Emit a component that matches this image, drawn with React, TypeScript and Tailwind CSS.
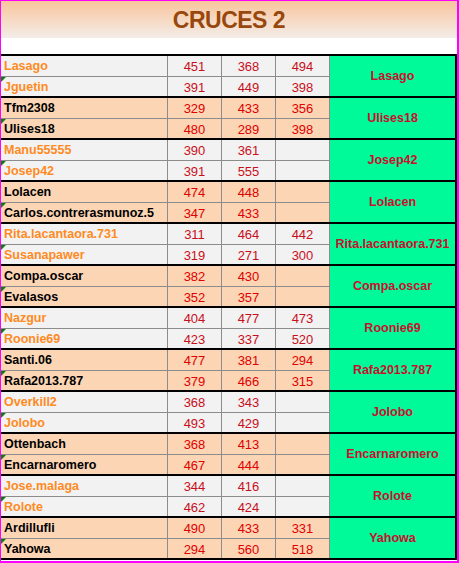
import React from "react";

type Player = { name: string; scores: string[] };
type Cross = { a: Player; b: Player; winner: string };

const crosses: Cross[] = [
  { a: { name: "Lasago", scores: ["451", "368", "494"] }, b: { name: "Jguetin", scores: ["391", "449", "398"] }, winner: "Lasago" },
  { a: { name: "Tfm2308", scores: ["329", "433", "356"] }, b: { name: "Ulises18", scores: ["480", "289", "398"] }, winner: "Ulises18" },
  { a: { name: "Manu55555", scores: ["390", "361", ""] }, b: { name: "Josep42", scores: ["391", "555", ""] }, winner: "Josep42" },
  { a: { name: "Lolacen", scores: ["474", "448", ""] }, b: { name: "Carlos.contrerasmunoz.5", scores: ["347", "433", ""] }, winner: "Lolacen" },
  { a: { name: "Rita.lacantaora.731", scores: ["311", "464", "442"] }, b: { name: "Susanapawer", scores: ["319", "271", "300"] }, winner: "Rita.lacantaora.731" },
  { a: { name: "Compa.oscar", scores: ["382", "430", ""] }, b: { name: "Evalasos", scores: ["352", "357", ""] }, winner: "Compa.oscar" },
  { a: { name: "Nazgur", scores: ["404", "477", "473"] }, b: { name: "Roonie69", scores: ["423", "337", "520"] }, winner: "Roonie69" },
  { a: { name: "Santi.06", scores: ["477", "381", "294"] }, b: { name: "Rafa2013.787", scores: ["379", "466", "315"] }, winner: "Rafa2013.787" },
  { a: { name: "Overkill2", scores: ["368", "343", ""] }, b: { name: "Jolobo", scores: ["493", "429", ""] }, winner: "Jolobo" },
  { a: { name: "Ottenbach", scores: ["368", "413", ""] }, b: { name: "Encarnaromero", scores: ["467", "444", ""] }, winner: "Encarnaromero" },
  { a: { name: "Jose.malaga", scores: ["344", "416", ""] }, b: { name: "Rolote", scores: ["462", "424", ""] }, winner: "Rolote" },
  { a: { name: "Ardillufli", scores: ["490", "433", "331"] }, b: { name: "Yahowa", scores: ["294", "560", "518"] }, winner: "Yahowa" },
];

const font = { fontFamily: '"Liberation Sans", Arial, sans-serif' };

function Row({ p, light, second }: { p: Player; light: boolean; second: boolean }) {
  const bg = light ? "bg-[#f2f2f2]" : "bg-[#fcd5b4]";
  const nameColor = light ? "text-[#ff8a1f]" : "text-black";
  const numColor = light ? "text-[#c8101c]" : "text-[#e00000]";
  const h = second ? "h-[20px] border-t border-[#8c8c8c]" : "h-[20px]";
  return (
    <>
      <div className={`${bg} ${h} relative flex items-center pl-[3px] border-r border-[#8c8c8c] text-[12.5px] font-bold leading-none ${nameColor} whitespace-nowrap overflow-hidden`}>
        {second && (
          <span className="absolute left-0 top-0 w-0 h-0 border-t-[5px] border-r-[5px] border-t-[#0a7d0a] border-r-transparent" />
        )}
        <span className="pt-[1px]">{p.name}</span>
      </div>
      {p.scores.map((s, i) => (
        <div key={i} className={`${bg} ${h} flex items-center justify-center border-r border-[#8c8c8c] text-[13px] leading-none ${numColor}`}>
          <span className="pt-[1px]">{s}</span>
        </div>
      ))}
    </>
  );
}

export default function App() {
  return (
    <div className="w-[459px] h-[563px] bg-white border-l border-t border-r-2 border-b-2 border-[#ff00ff] overflow-hidden" style={font}>
      <div className="h-[37px] bg-gradient-to-b from-[#f8c49c] to-[#f3ede8] flex items-center justify-center">
        <span className="text-[23px] font-bold text-[#98480c] tracking-[-0.5px] pt-[1px]">CRUCES 2</span>
      </div>
      <div className="h-[16px]" />
      <div className="border-r-2 border-b-2 border-black w-[456px]">
        {crosses.map((c, gi) => {
          const light = gi % 2 === 0;
          return (
            <div key={gi} className="grid grid-cols-[167px_54px_54px_54px_1fr] grid-rows-[20px_20px] border-t-2 border-black">
              <Row p={c.a} light={light} second={false} />
              <div className="row-span-2 col-start-5 row-start-1 bg-[#00fa9a] flex items-center justify-center text-[12.5px] font-bold text-[#c8102e] leading-none whitespace-nowrap">
                {c.winner}
              </div>
              <Row p={c.b} light={light} second={true} />
            </div>
          );
        })}
      </div>
    </div>
  );
}
